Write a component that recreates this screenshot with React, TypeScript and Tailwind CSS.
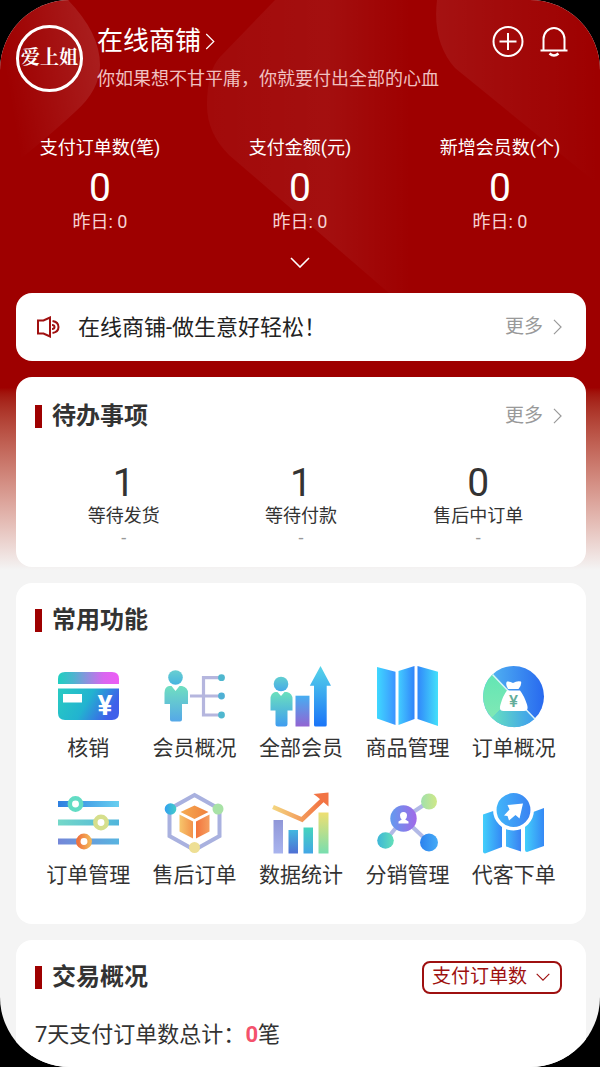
import type { ReactNode } from "react";

const stats = [
  { label: "支付订单数(笔)", value: 0, yesterday: 0 },
  { label: "支付金额(元)", value: 0, yesterday: 0 },
  { label: "新增会员数(个)", value: 0, yesterday: 0 },
];

const todos = [
  { label: "等待发货", value: 1 },
  { label: "等待付款", value: 1 },
  { label: "售后中订单", value: 0 },
];

type GradProps = { id: string; from: string; to: string; vertical?: boolean };

function Grad({ id, from, to, vertical }: GradProps) {
  return (
    <linearGradient id={id} x1="0" y1="0" x2={vertical ? "0" : "1"} y2={vertical ? "1" : "0"}>
      <stop offset="0" stopColor={from} />
      <stop offset="1" stopColor={to} />
    </linearGradient>
  );
}

function Icon({ children }: { children: ReactNode }) {
  return (
    <svg viewBox="0 0 61 61" className="size-[61px] overflow-visible" aria-hidden="true">
      {children}
    </svg>
  );
}

function Chevron({ className }: { className: string }) {
  return (
    <svg viewBox="0 0 10 18" className={className} fill="none" stroke="currentColor" strokeWidth="1.3" aria-hidden="true">
      <path d="M1 1l8 8-8 8" />
    </svg>
  );
}

function ChevronDown({ className }: { className: string }) {
  return (
    <svg viewBox="0 0 20 11" className={className} fill="none" stroke="currentColor" strokeWidth="1.6" aria-hidden="true">
      <path d="M1 1l9 9 9-9" />
    </svg>
  );
}

function CardIcon() {
  return (
    <Icon>
      <defs>
        <linearGradient id="card-top">
          <stop offset="0" stopColor="#1fcfc0" />
          <stop offset="0.25" stopColor="#4db5cf" />
          <stop offset="0.75" stopColor="#d966f0" />
          <stop offset="1" stopColor="#ee5cf5" />
        </linearGradient>
        <linearGradient id="card-body" x1="0" y1="0" x2="1" y2="0.3">
          <stop offset="0" stopColor="#28cbc2" />
          <stop offset="0.55" stopColor="#22b3d0" />
          <stop offset="1" stopColor="#3f5fea" />
        </linearGradient>
      </defs>
      <path d="M0 18v-5q0-7 7-7h47q7 0 7 7v5z" fill="url(#card-top)" />
      <path d="M0 22.500h61v24.500q0 7-7 7H7q-7 0-7-7z" fill="url(#card-body)" />
      <path d="M5 28h19v8.500H5z" fill="#fff" />
      <text x="47" y="49" textAnchor="middle" fontSize="28" fontWeight="700" fontFamily="Roboto, sans-serif" fill="#fff">¥</text>
    </Icon>
  );
}

function MemberOverviewIcon() {
  return (
    <Icon>
      <defs>
        <Grad id="mo-head" from="#69cfd0" to="#46b4e0" vertical />
        <Grad id="mo-body" from="#70dfc0" to="#55a8e8" vertical />
      </defs>
      <circle cx="11.5" cy="11.5" r="7.3" fill="url(#mo-head)" />
      <path d="M5 20h2.500l4 5 4-5H18q6 1.500 6 7v11h-6v15.500q0 2-2 2H8q-2 0-2-2V38H.500V27Q.500 21 5 20z" fill="url(#mo-body)" />
      <path d="M26 30h31M56 11.700H39.500V49H56" fill="none" stroke="#b5b6de" strokeWidth="3.2" />
      <circle cx="57.5" cy="11.7" r="3.4" fill="#4fb7cf" />
      <circle cx="57.5" cy="30" r="3.4" fill="#4fb0d4" />
      <circle cx="57.5" cy="49" r="3.4" fill="#4fb7cf" />
    </Icon>
  );
}

function AllMembersIcon() {
  return (
    <Icon>
      <defs>
        <Grad id="am-head" from="#62cfd0" to="#46a9e8" vertical />
        <Grad id="am-body" from="#6be0bd" to="#3f9cf0" vertical />
        <Grad id="am-bar" from="#46aef2" to="#9264d2" vertical />
        <Grad id="am-arrow" from="#57d5e8" to="#1a74f8" vertical />
      </defs>
      <circle cx="11" cy="18" r="7.3" fill="url(#am-head)" />
      <path d="M5 26h2.500l3.500 4 3.500-4H17q5.500 1.500 5.500 7v11.500h-5V58q0 2.500-2.500 2.500H8Q5.500 60.500 5.500 58V44.500h-5V33Q.500 27.500 5 26z" fill="url(#am-body)" />
      <path d="M25.500 29.700h14v30.800h-14z" fill="url(#am-bar)" />
      <path d="M50.500 0L61 19.700h-4.300V59q0 1.500-1.500 1.500H45.500q-1.500 0-1.500-1.500V19.700h-4.200z" fill="url(#am-arrow)" />
    </Icon>
  );
}

function GoodsIcon() {
  return (
    <Icon>
      <defs>
        <Grad id="gd-a" from="#3fd8ff" to="#3c93ff" />
        <Grad id="gd-b" from="#43ccff" to="#3183fa" />
        <Grad id="gd-c" from="#3187fb" to="#43e0fa" />
      </defs>
      <path d="M0 1l18.500 4.700V59L0 52.500z" fill="url(#gd-a)" />
      <path d="M21.500 5L37.500 0v53l-16 6z" fill="url(#gd-b)" />
      <path d="M40.500 0L61 5.700V60l-20.500-7z" fill="url(#gd-c)" />
    </Icon>
  );
}

function OrderOverviewIcon() {
  return (
    <Icon>
      <defs>
        <Grad id="oo-a" from="#56bdf2" to="#2869ef" />
        <Grad id="oo-b" from="#62e6b4" to="#80e8b5" vertical />
        <Grad id="oo-c" from="#66e0c0" to="#3c9cf0" />
      </defs>
      <circle cx="30.5" cy="30.5" r="30.5" fill="url(#oo-a)" />
      <path d="M30.500 30.500L10 8A30.500 30.500 0 0 0 9 52z" fill="url(#oo-b)" />
      <path d="M30.500 30.500L9 52a30.500 30.500 0 0 0 42.500 1z" fill="url(#oo-c)" />
      <path d="M9.500 8.500l21 22L52 53" stroke="#d8f3fa" strokeWidth="1.5" />
      <path d="M25 23q-3-5-1-7.500 3-.500 6 1.500 4-2.500 8-1.500 1 3.500-2.500 7.500z" fill="#fff" />
      <path d="M24 24.500h13q4 5 7 14 2 6.500-3 6.500H20.500q-5 0-3-6.500 2.500-9 6.500-14z" fill="#fff" />
      <text x="30.5" y="41" textAnchor="middle" fontSize="17" fontWeight="500" fontFamily="Roboto, sans-serif" fill="#63ad9a">¥</text>
    </Icon>
  );
}

function OrderManageIcon() {
  return (
    <Icon>
      <defs>
        <Grad id="om-a" from="#2d7fe0" to="#68cff0" />
        <Grad id="om-b" from="#74d8c8" to="#50b5dc" />
        <Grad id="om-c" from="#7487d8" to="#58b4e0" />
        <Grad id="om-d" from="#f0743e" to="#f2b458" />
      </defs>
      <path d="M0 8h61v6H0z" fill="url(#om-a)" />
      <path d="M0 26.500h61v6H0z" fill="url(#om-b)" />
      <path d="M0 45.500h61v6H0z" fill="url(#om-c)" />
      <circle cx="17.5" cy="11" r="5.7" fill="#fff" stroke="#62dcc4" strokeWidth="4.5" />
      <circle cx="43" cy="29.5" r="5.7" fill="#fff" stroke="#d6df8c" strokeWidth="4.5" />
      <circle cx="26" cy="48.5" r="5.7" fill="#fff" stroke="url(#om-d)" strokeWidth="4.5" />
    </Icon>
  );
}

function AfterSaleIcon() {
  return (
    <Icon>
      <defs>
        <Grad id="as-top" from="#f5ac52" to="#f0803c" />
        <Grad id="as-left" from="#f7c66c" to="#f2914a" />
        <Grad id="as-right" from="#f3743c" to="#f5a060" />
        <Grad id="as-node" from="#32a0f0" to="#43cdc8" />
      </defs>
      <path d="M30.500 2L55.500 16v27L30.500 57 5.500 43V16z" fill="none" stroke="#a9b1df" strokeWidth="4" />
      <circle cx="6.5" cy="16" r="5.8" fill="url(#as-node)" />
      <circle cx="54" cy="16" r="5.5" fill="#a8e2a6" />
      <circle cx="30.5" cy="54.5" r="5.5" fill="#eedf94" />
      <path d="M30.500 12.500L44.500 19l-14 7-14-7z" fill="url(#as-top)" />
      <path d="M15.500 21.500l13.500 7v17l-13.500-7z" fill="url(#as-left)" />
      <path d="M45.500 21.500l-13.500 7v17l13.500-7z" fill="url(#as-right)" />
    </Icon>
  );
}

function StatisticsIcon() {
  return (
    <Icon>
      <defs>
        <Grad id="st-a" from="#9097d8" to="#a9b4ee" vertical />
        <Grad id="st-b" from="#43b7e0" to="#4f6fd4" vertical />
        <Grad id="st-c" from="#45d4bd" to="#43a6e6" vertical />
        <Grad id="st-d" from="#efdf72" to="#78deaf" vertical />
        <Grad id="st-e" from="#f4d680" to="#f27040" />
      </defs>
      <path d="M3.500 27H13v33.500H3.500z" fill="url(#st-a)" />
      <path d="M18.500 37H28v23.500h-9.500z" fill="url(#st-b)" />
      <path d="M33.500 34.500H43v26h-9.500z" fill="url(#st-c)" />
      <path d="M48.500 19.500h10v41h-10z" fill="url(#st-d)" />
      <path d="M3 14l29 12.500L53 6.500" fill="none" stroke="url(#st-e)" strokeWidth="4.5" />
      <path d="M43.500 1l15-1.500V13.500l-4-3.500-7-6z" fill="#f27444" />
    </Icon>
  );
}

function DistributionIcon() {
  return (
    <Icon>
      <defs>
        <Grad id="ds-a" from="#629bee" to="#a169e8" />
        <Grad id="ds-b" from="#a1e0ac" to="#cfe887" />
        <Grad id="ds-c" from="#3eb6d8" to="#63dfb8" />
        <Grad id="ds-d" from="#2c82ee" to="#46abf6" />
      </defs>
      <path d="M26.500 25.500L52 8.500M26.500 25.500L8.500 47.500M26.500 25.500L52 49.500" stroke="#b2b9e6" strokeWidth="4" />
      <circle cx="26.5" cy="25.5" r="13.2" fill="url(#ds-a)" />
      <circle cx="52" cy="8.5" r="8" fill="url(#ds-b)" />
      <circle cx="8.5" cy="47.5" r="8.3" fill="url(#ds-c)" />
      <circle cx="52" cy="49.5" r="9" fill="url(#ds-d)" />
      <path d="M26.500 19q3.500 0 3.500 3.500 0 2.500-1.800 4l3.300 2v2h-10v-2l3.300-2q-1.800-1.500-1.800-4 0-3.500 3.500-3.500z" fill="#fff" />
    </Icon>
  );
}

function ProxyOrderIcon() {
  return (
    <Icon>
      <defs>
        <Grad id="po-a" from="#42cffb" to="#3588f5" />
        <Grad id="po-b" from="#42b8fa" to="#3a80f2" />
      </defs>
      <path d="M0 21.500L19 15v39L2 60.500q-2 0-2-2z" fill="url(#po-a)" />
      <path d="M23 35h15v23.500l-15-5z" fill="url(#po-b)" />
      <path d="M42 22l19-7v38l-17 6q-2 0-2-2z" fill="url(#po-a)" />
      <circle cx="30.5" cy="17" r="18.7" fill="url(#po-b)" stroke="#fff" strokeWidth="3.5" />
      <path d="M40 10.500l-3.500 15-4-3.500-6.500 5.500-1.500-4.500-3.500-.500 5.500-6-2-4.500z" fill="#fff" />
    </Icon>
  );
}

const features = [
  { label: "核销", icon: <CardIcon /> },
  { label: "会员概况", icon: <MemberOverviewIcon /> },
  { label: "全部会员", icon: <AllMembersIcon /> },
  { label: "商品管理", icon: <GoodsIcon /> },
  { label: "订单概况", icon: <OrderOverviewIcon /> },
  { label: "订单管理", icon: <OrderManageIcon /> },
  { label: "售后订单", icon: <AfterSaleIcon /> },
  { label: "数据统计", icon: <StatisticsIcon /> },
  { label: "分销管理", icon: <DistributionIcon /> },
  { label: "代客下单", icon: <ProxyOrderIcon /> },
];

function Backdrop() {
  return (
    <div className="absolute inset-x-0 top-0 h-[570px] bg-linear-to-b from-[#9e0000] from-68% to-[#f4f4f4]">
      <svg viewBox="0 0 600 300" className="w-full" aria-hidden="true">
        <defs>
          <linearGradient id="bg-a" x1="0" y1="0.6" x2="1" y2="0.3">
            <stop offset="0.1" stopColor="#fff" stopOpacity="0" />
            <stop offset="1" stopColor="#fff" stopOpacity="0.12" />
          </linearGradient>
          <linearGradient id="bg-b">
            <stop offset="0" stopColor="#fff" stopOpacity="0.04" />
            <stop offset="0.35" stopColor="#fff" stopOpacity="0.06" />
            <stop offset="0.6" stopColor="#fff" stopOpacity="0" />
          </linearGradient>
          <linearGradient id="bg-c">
            <stop offset="0" stopColor="#fff" stopOpacity="0.07" />
            <stop offset="1" stopColor="#fff" stopOpacity="0" />
          </linearGradient>
        </defs>
        <path d="M0 0h68Q100 33 100 65q0 25-25 47Q45 140 0 175z" fill="url(#bg-a)" />
        <path d="M275 0l-55 57q-13 14-13 48 0 28 22 50l168 145h150V0z" fill="url(#bg-b)" />
        <path d="M437 0q-5 42 18 68l145 118V0z" fill="url(#bg-c)" />
      </svg>
    </div>
  );
}

function CardTitle({ children }: { children: ReactNode }) {
  return (
    <h2 className="flex items-center gap-2.5 text-2xl font-bold text-[#333]">
      <span className="h-[23px] w-[7px] bg-[#9e0000]" />
      {children}
    </h2>
  );
}

function MoreLink() {
  return (
    <a href="#more" className="flex items-center gap-2.5 text-[19px] text-[#999]">
      更多
      <Chevron className="h-4 w-[9px]" />
    </a>
  );
}

function Header() {
  return (
    <header className="flex items-start pt-[25px] pr-8 pl-4 text-white">
      <div className="flex size-[67px] shrink-0 items-center justify-center rounded-full border-3 border-white font-['Liberation_Serif','Noto_Serif_CJK_SC','Noto_Sans_CJK_SC',serif] text-[19px] font-bold whitespace-nowrap">
        爱上姐
      </div>
      <div className="ml-3.5 flex-1">
        <a href="#shop" className="flex items-center gap-1 text-[26px] leading-8">
          在线商铺
          <Chevron className="h-[17px] w-[10px]" />
        </a>
        <p className="mt-2.5 text-[18px] leading-6 whitespace-nowrap text-[#f0c0c0]">你如果想不甘平庸，你就要付出全部的心血</p>
      </div>
      <div className="flex gap-4">
        <button type="button" aria-label="添加">
          <svg viewBox="0 0 32 32" className="size-8" fill="none" stroke="currentColor" strokeWidth="2">
            <circle cx="16" cy="16.5" r="14.5" />
            <path d="M7.500 16.500h17M16 8v17" />
          </svg>
        </button>
        <button type="button" aria-label="通知">
          <svg viewBox="0 0 28 32" className="h-8 w-7" fill="none" stroke="currentColor" strokeWidth="2">
            <path d="M3.500 25.500V14a10.500 11 0 0 1 21 0v11.500" />
            <path d="M.500 25.500h27" />
            <path d="M9.500 28.500q4.500 4 9 0" strokeWidth="2.5" />
          </svg>
        </button>
      </div>
    </header>
  );
}

function App() {
  return (
    <div className="min-h-screen bg-black font-[Roboto,'Noto_Sans_CJK_SC',sans-serif]">
      <div className="relative flex min-h-screen flex-col overflow-hidden rounded-[70px] bg-[#f4f4f4]">
        <Backdrop />
        <div className="relative flex flex-1 flex-col">
          <Header />

          <section className="mt-11 grid grid-cols-3 text-center text-white">
            {stats.map((item) => (
              <div key={item.label}>
                <p className="text-[18px] leading-6">{item.label}</p>
                <p className="mt-2 text-[39px] leading-10">{item.value}</p>
                <p className="text-[18px] leading-7 text-[#f6d4d4]">昨日: {item.yesterday}</p>
              </div>
            ))}
          </section>
          <button type="button" aria-label="展开" className="mt-[21px] self-center text-white">
            <ChevronDown className="h-[11px] w-5" />
          </button>

          <main className="mt-[25px] flex flex-1 flex-col gap-4 pr-3.5 pl-4">
            <section className="flex h-[68px] items-center rounded-2xl bg-white pr-6 pl-5">
              <svg viewBox="0 0 24 22" className="h-[22px] w-6 text-[#a01010]" fill="none" stroke="currentColor" strokeWidth="2" aria-hidden="true">
                <path d="M2 4.500h5.500l6.500-3v19l-6.500-3H2z" />
                <path d="M16.500 5q6 1 6 6t-6 6" />
                <path d="M16 9q2.500 0 2.500 2T16 13" />
              </svg>
              <p className="ml-[18px] flex-1 text-[22px] text-[#222]">在线商铺-做生意好轻松！</p>
              <MoreLink />
            </section>

            <section className="rounded-2xl bg-white px-[19px] pt-[21px] pb-[19px]">
              <div className="flex h-9 items-center justify-between pr-[5px]">
                <CardTitle>待办事项</CardTitle>
                <MoreLink />
              </div>
              <div className="mt-7 grid grid-cols-3 text-center text-[#333]">
                {todos.map((item) => (
                  <div key={item.label}>
                    <p className="text-[39px] leading-[42px]">{item.value}</p>
                    <p className="text-[18px] leading-6">{item.label}</p>
                    <p className="text-lg leading-5 text-[#999]">-</p>
                  </div>
                ))}
              </div>
            </section>

            <section className="rounded-2xl bg-white px-[19px] pt-[21px] pb-[33px]">
              <div className="flex h-8 items-center">
                <CardTitle>常用功能</CardTitle>
              </div>
              <div className="mt-[30px] grid grid-cols-5 gap-y-[29px]">
                {features.map((item) => (
                  <a key={item.label} href="#feature" className="flex flex-col items-center gap-[5px] text-[21px] leading-8 text-[#333]">
                    {item.icon}
                    {item.label}
                  </a>
                ))}
              </div>
            </section>

            <section className="flex-1 rounded-t-2xl bg-white px-[19px] pt-[19px]">
              <div className="flex h-9 items-center justify-between pr-[5px]">
                <CardTitle>交易概况</CardTitle>
                <div className="relative flex items-center text-[#9e1010]">
                  <select aria-label="交易指标" className="h-[33px] w-[140px] appearance-none rounded-lg border-2 border-[#9e1010] bg-white pl-2 text-[19px] leading-7">
                    <option>支付订单数</option>
                    <option>支付金额</option>
                  </select>
                  <ChevronDown className="pointer-events-none absolute right-3 h-2 w-3.5" />
                </div>
              </div>
              <p className="mt-6 text-[22px] leading-8 text-[#333]">
                7天支付订单数总计：<b className="text-[#f4516c]">0</b>笔
              </p>
            </section>
          </main>
        </div>
      </div>
    </div>
  );
}

export default App;
